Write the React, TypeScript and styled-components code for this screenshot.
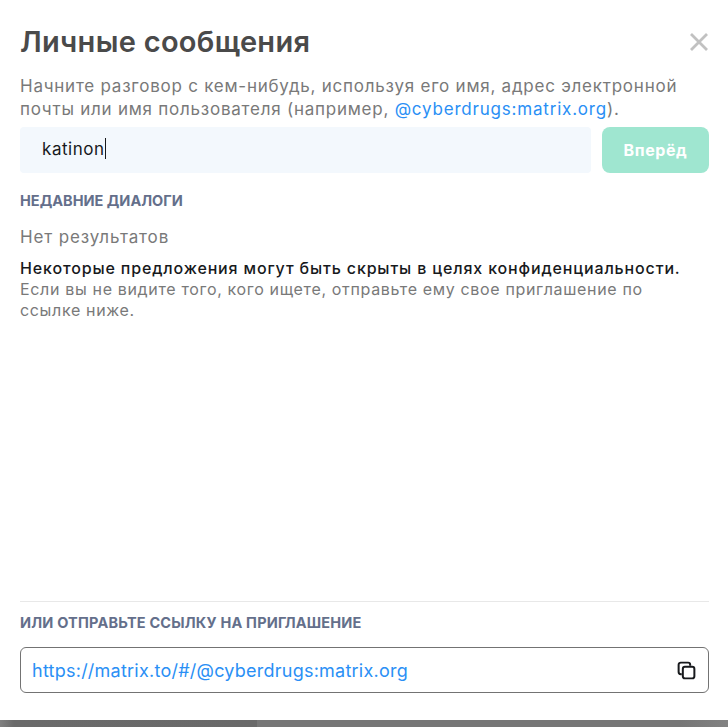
import React from "react";
import styled, { createGlobalStyle } from "styled-components";

const Global = createGlobalStyle`
  html, body { margin: 0; padding: 0; height: 100%; overflow: hidden; }
  body { font-family: Inter, "Liberation Sans", sans-serif; background: #757575; }
  #root { height: 100%; }
`;

const Page = styled.div`
  width: 728px;
  height: 727px;
  display: flex;
  flex-direction: column;
  background: linear-gradient(90deg, #808080 0, #6a6a6a 14px, #696969 257px, #767676 257px, #767676 680px, #828282 100%);
`;

const Dialog = styled.div`
  width: 728px;
  height: 720px;
  box-sizing: border-box;
  padding: 20px 19px 0 20px;
  background: #fff;
  display: flex;
  flex-direction: column;
`;

const Header = styled.header`
  display: flex;
  align-items: flex-start;
  justify-content: space-between;
  height: 44px;
`;

const Title = styled.h1`
  margin: 0;
  font-size: 29px;
  line-height: 44px;
  font-weight: 600;
  letter-spacing: 0.3px;
  color: #4a4a4a;
`;

const CloseButton = styled.button`
  border: 0;
  padding: 0;
  background: none;
  width: 20px;
  height: 20px;
  margin-top: 12px;
  color: #c1c1c1;
  display: block;
  svg { display: block; }
`;

const Lead = styled.p`
  margin: 11px 0 0;
  font-size: 17px;
  line-height: 23px;
  color: #797979;
  letter-spacing: 0.76px;
`;

const Link = styled.span`
  color: #2a8ff5;
  letter-spacing: 0.8px;
`;

const InputRow = styled.div`
  display: flex;
  gap: 11px;
  margin-top: 6px;
`;

const Field = styled.div`
  flex: 1;
  height: 46px;
  box-sizing: border-box;
  padding: 0 0 3px 22px;
  display: flex;
  align-items: center;
  background: #f3f8fd;
  border-radius: 4px;
  font-size: 17px;
  letter-spacing: 0.55px;
  color: #17191c;
`;

const Caret = styled.span`
  width: 1px;
  height: 21px;
  background: #17191c;
`;

const GoButton = styled.button`
  width: 107px;
  height: 46px;
  border: 0;
  padding: 0;
  border-radius: 8px;
  background: #9fe6d0;
  color: #fff;
  font: 700 16px Inter, "Liberation Sans", sans-serif;
  letter-spacing: 0.6px;
`;

const SectionLabel = styled.h3<{ $top: number; $track: number }>`
  margin: ${(p) => p.$top}px 0 0;
  font-size: 14.5px;
  line-height: 18px;
  font-weight: 700;
  letter-spacing: ${(p) => p.$track}px;
  color: #646f8b;
`;

const NoResults = styled.div`
  margin-top: 16px;
  font-size: 17px;
  line-height: 22px;
  letter-spacing: 0.85px;
  color: #797979;
`;

const Notice = styled.p`
  margin: 10px 0 0;
  font-size: 16px;
  line-height: 21px;
  letter-spacing: 0.66px;
  color: #797979;
`;

const NoticeStrong = styled.span`
  display: block;
  font-weight: 500;
  letter-spacing: 0.85px;
  color: #17191c;
`;

const Footer = styled.footer`
  margin-top: auto;
  border-top: 1px solid #e8e8e8;
  padding-top: 12px;
  padding-bottom: 27px;
`;

const LinkBox = styled.div`
  margin-top: 15px;
  height: 46px;
  box-sizing: border-box;
  border: 1px solid #737373;
  border-radius: 6px;
  padding: 0 11px;
  display: flex;
  align-items: center;
  justify-content: space-between;
  font-size: 18px;
  letter-spacing: 0.24px;
  color: #2a8ff5;
`;

const CopyIcon = styled.svg`
  display: block;
  color: #17191c;
`;

export default function App() {
  return (
    <>
      <Global />
      <Page>
        <Dialog>
          <Header>
            <Title>Личные сообщения</Title>
            <CloseButton aria-label="Закрыть">
              <svg width="20" height="20" viewBox="0 0 20 20" fill="none" stroke="currentColor" strokeWidth="2.8">
                <path d="M2 2 18 18M18 2 2 18" />
              </svg>
            </CloseButton>
          </Header>
          <Lead>
            Начните разговор с кем-нибудь, используя его имя, адрес электронной почты или имя пользователя (например,{" "}
            <Link>@cyberdrugs:matrix.org</Link>).
          </Lead>
          <InputRow>
            <Field>
              katinon
              <Caret />
            </Field>
            <GoButton>Вперёд</GoButton>
          </InputRow>
          <SectionLabel $top={19} $track={0}>НЕДАВНИЕ ДИАЛОГИ</SectionLabel>
          <NoResults>Нет результатов</NoResults>
          <Notice>
            <NoticeStrong>Некоторые предложения могут быть скрыты в целях конфиденциальности.</NoticeStrong>
            Если вы не видите того, кого ищете, отправьте ему свое приглашение по
            <br />
            ссылке ниже.
          </Notice>
          <Footer>
            <SectionLabel $top={0} $track={0.2}>ИЛИ ОТПРАВЬТЕ ССЫЛКУ НА ПРИГЛАШЕНИЕ</SectionLabel>
            <LinkBox>
              https://matrix.to/#/@cyberdrugs:matrix.org
              <CopyIcon width="21" height="21" viewBox="0 0 20 20" fill="none" stroke="currentColor" strokeWidth="1.9">
                <path d="M5.5 13.5H4.5A2 2 0 0 1 2.5 11.5V4.5A2 2 0 0 1 4.5 2.5H11.5A2 2 0 0 1 13.5 4.5V5.5" />
                <rect x="6.5" y="6.5" width="11" height="11" rx="2" />
              </CopyIcon>
            </LinkBox>
          </Footer>
        </Dialog>
      </Page>
    </>
  );
}
